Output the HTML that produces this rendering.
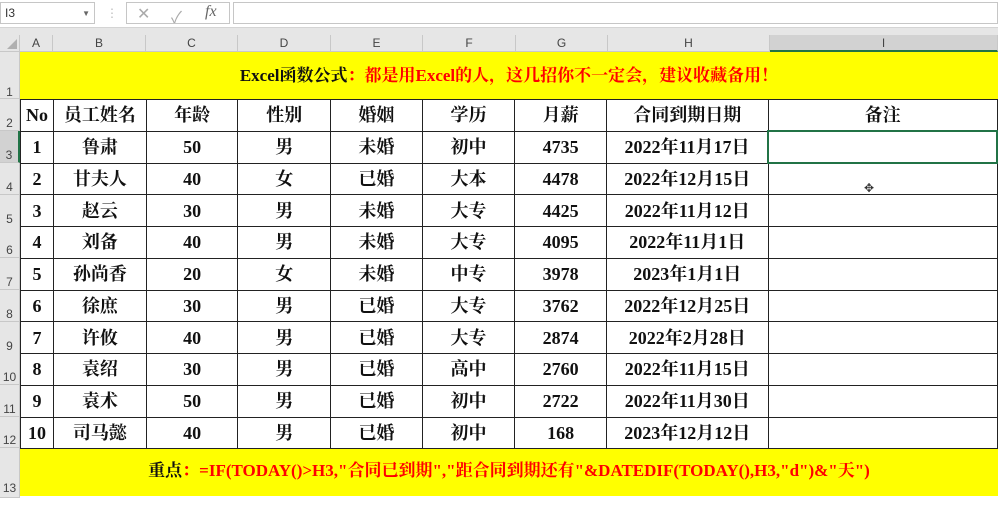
<!DOCTYPE html>
<html><head><meta charset="utf-8"><style>
*{margin:0;padding:0;box-sizing:border-box}
body{width:998px;height:498px;overflow:hidden;background:#fff;position:relative;font-family:"Liberation Sans","Noto Sans CJK SC",sans-serif}
.abs{position:absolute}
.tb{left:0;top:0;width:998px;height:28px;background:#fff;border-bottom:1px solid #d4d4d4}
.nb{left:0;top:2px;width:95px;height:22px;border:1px solid #c6c6c6;font-size:12px;color:#333;padding:3px 4px}
.fx{left:126px;top:2px;width:104px;height:22px;border:1px solid #c6c6c6;color:#aaa;font-size:16px}
.fb{left:233px;top:2px;width:765px;height:22px;border:1px solid #c6c6c6}
.gap{left:0;top:28px;width:998px;height:7px;background:#e6e6e6}
.ch{top:35px;height:17px;background:#e6e6e6;border-right:1px solid #c8c8c8;border-bottom:1px solid #c8c8c8;font-size:12px;color:#444;text-align:center;line-height:17px}
.rh{left:0;width:20px;background:#e6e6e6;border-bottom:1px solid #c8c8c8;border-right:1px solid #c8c8c8;font-size:12px;color:#444;text-align:center}
table{position:absolute;left:20px;top:99px;border-collapse:collapse;table-layout:fixed;font-family:"Liberation Serif","Noto Serif CJK SC",serif;font-weight:bold;font-size:18px;color:#111}
td{border:1px solid #222;text-align:center;height:31.75px;padding:0;white-space:nowrap;line-height:20px;vertical-align:middle}
td span{display:inline-block;line-height:20px;height:20px;overflow:visible}
.y{background:#ff0;font-family:"Liberation Serif","Noto Serif CJK SC",serif;font-weight:bold;font-size:17px;text-align:center;color:#111}
.r{color:#f00}
</style></head><body>
<div class="abs tb"></div>
<div class="abs nb">I3<span style="float:right;font-size:8px;color:#666;margin-top:3px">▼</span></div>
<div class="abs" style="left:106px;top:6px;color:#bbb;font-size:12px">⋮</div>
<div class="abs fx"><span class="abs" style="left:10px;top:1px">✕</span><span class="abs" style="left:44px;top:1px">✓</span><span class="abs" style="left:78px;top:0px;font-style:italic;font-family:'Liberation Serif',serif;color:#666">fx</span></div>
<div class="abs fb"></div>
<div class="abs gap"></div>
<div class="abs ch" style="left:0;width:20px"><span style="position:absolute;right:2px;bottom:2px;width:0;height:0;border-left:10px solid transparent;border-bottom:10px solid #b0b0b0"></span></div>
<div class="abs ch" style="left:20px;width:33px">A</div>
<div class="abs ch" style="left:53px;width:93px">B</div>
<div class="abs ch" style="left:146px;width:92px">C</div>
<div class="abs ch" style="left:238px;width:93px">D</div>
<div class="abs ch" style="left:331px;width:92px">E</div>
<div class="abs ch" style="left:423px;width:93px">F</div>
<div class="abs ch" style="left:516px;width:92px">G</div>
<div class="abs ch" style="left:608px;width:162px">H</div>
<div class="abs ch" style="left:770px;width:228px;background:#d2d2d2;border-bottom:2px solid #217346">I</div>
<div class="abs rh" style="top:52px;height:47px;line-height:80px">1</div>
<div class="abs rh" style="top:99px;height:32px;line-height:48px">2</div>
<div class="abs rh" style="top:131px;height:32px;line-height:48px;background:#d2d2d2;border-right:2px solid #217346">3</div>
<div class="abs rh" style="top:163px;height:32px;line-height:48px">4</div>
<div class="abs rh" style="top:195px;height:32px;line-height:48px">5</div>
<div class="abs rh" style="top:226px;height:32px;line-height:48px">6</div>
<div class="abs rh" style="top:258px;height:32px;line-height:48px">7</div>
<div class="abs rh" style="top:290px;height:32px;line-height:48px">8</div>
<div class="abs rh" style="top:322px;height:32px;line-height:48px">9</div>
<div class="abs rh" style="top:353px;height:32px;line-height:48px">10</div>
<div class="abs rh" style="top:385px;height:32px;line-height:48px">11</div>
<div class="abs rh" style="top:417px;height:31px;line-height:46px">12</div>
<div class="abs rh" style="top:448px;height:50px;line-height:80px">13</div>
<div class="abs y" style="left:20px;top:52px;width:978px;height:47px;line-height:47px">Excel函数公式<span class="r">：都是用Excel的人，这几招你不一定会，建议收藏备用！</span></div>
<table>
<colgroup><col style="width:33px"><col style="width:93px"><col style="width:92px"><col style="width:93px"><col style="width:92px"><col style="width:93px"><col style="width:92px"><col style="width:162px"><col style="width:230px"></colgroup>
<tr><td>No</td><td>员工姓名</td><td>年龄</td><td>性别</td><td>婚姻</td><td>学历</td><td>月薪</td><td>合同到期日期</td><td>备注</td></tr>
<tr><td>1</td><td>鲁肃</td><td>50</td><td>男</td><td>未婚</td><td>初中</td><td>4735</td><td>2022年11月17日</td><td style="border:2px solid #217346"></td></tr>
<tr><td>2</td><td>甘夫人</td><td>40</td><td>女</td><td>已婚</td><td>大本</td><td>4478</td><td>2022年12月15日</td><td></td></tr>
<tr><td>3</td><td>赵云</td><td>30</td><td>男</td><td>未婚</td><td>大专</td><td>4425</td><td>2022年11月12日</td><td></td></tr>
<tr><td>4</td><td>刘备</td><td>40</td><td>男</td><td>未婚</td><td>大专</td><td>4095</td><td>2022年11月1日</td><td></td></tr>
<tr><td>5</td><td>孙尚香</td><td>20</td><td>女</td><td>未婚</td><td>中专</td><td>3978</td><td>2023年1月1日</td><td></td></tr>
<tr><td>6</td><td>徐庶</td><td>30</td><td>男</td><td>已婚</td><td>大专</td><td>3762</td><td>2022年12月25日</td><td></td></tr>
<tr><td>7</td><td>许攸</td><td>40</td><td>男</td><td>已婚</td><td>大专</td><td>2874</td><td>2022年2月28日</td><td></td></tr>
<tr><td>8</td><td>袁绍</td><td>30</td><td>男</td><td>已婚</td><td>高中</td><td>2760</td><td>2022年11月15日</td><td></td></tr>
<tr><td>9</td><td>袁术</td><td>50</td><td>男</td><td>已婚</td><td>初中</td><td>2722</td><td>2022年11月30日</td><td></td></tr>
<tr><td>10</td><td>司马懿</td><td>40</td><td>男</td><td>已婚</td><td>初中</td><td>168</td><td>2023年12月12日</td><td></td></tr>
</table>
<div class="abs y" style="left:20px;top:449px;width:978px;height:47px;line-height:44px">重点<span class="r">：=IF(TODAY()&gt;H3,"合同已到期","距合同到期还有"&amp;DATEDIF(TODAY(),H3,"d")&amp;"天")</span></div>
<div class="abs" style="left:864px;top:181px;font-size:12px;color:#333">✥</div>
</body></html>
